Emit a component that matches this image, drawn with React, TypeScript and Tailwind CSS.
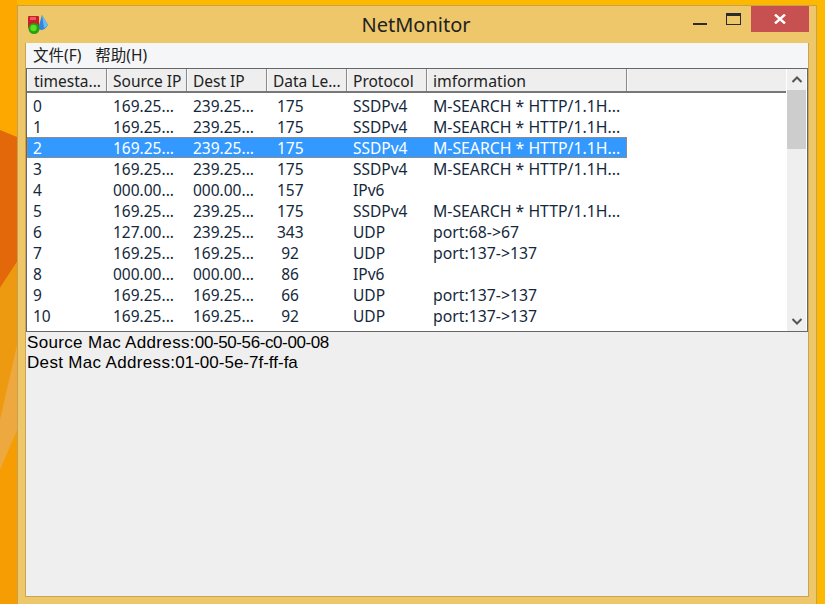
const font = "font-['Noto_Sans','Noto_Sans_CJK_SC',sans-serif]";

const columns = ["timesta...", "Source IP", "Dest IP", "Data Le...", "Protocol", "imformation"];

const search = "M-SEARCH * HTTP/1.1H...";
const rows = [
  ["0", "169.25...", "239.25...", "175", "SSDPv4", search],
  ["1", "169.25...", "239.25...", "175", "SSDPv4", search],
  ["2", "169.25...", "239.25...", "175", "SSDPv4", search],
  ["3", "169.25...", "239.25...", "175", "SSDPv4", search],
  ["4", "000.00...", "000.00...", "157", "IPv6", ""],
  ["5", "169.25...", "239.25...", "175", "SSDPv4", search],
  ["6", "127.00...", "239.25...", "343", "UDP", "port:68->67"],
  ["7", "169.25...", "169.25...", "92", "UDP", "port:137->137"],
  ["8", "000.00...", "000.00...", "86", "IPv6", ""],
  ["9", "169.25...", "169.25...", "66", "UDP", "port:137->137"],
  ["10", "169.25...", "169.25...", "92", "UDP", "port:137->137"],
];

// desktop wallpaper showing down the left edge of the window
function Wallpaper() {
  return (
    <svg className="absolute left-0 top-0" width="17" height="604" viewBox="0 0 17 604">
      <rect width="17" height="604" fill="#fca800" />
      <path d="M0 130 L17 137 L17 262 L0 288 Z" fill="#e2680a" />
      <path d="M0 288 L17 262 L17 470 L0 604 Z" fill="#ee9a10" />
      <path d="M0 420 L17 345 L17 440 L0 470 Z" fill="#eda83f" />
      <path d="M0 470 L17 430 L17 604 L0 604 Z" fill="#f59d02" />
    </svg>
  );
}

function AppIcon() {
  return (
    <svg width="22" height="22" viewBox="0 0 22 22">
      <path d="M11 15 L15 1 L21 11 Q18 16 14 16 Z" fill="#2f86dc" />
      <path d="M15 1 L21 11 Q20 13 17 14 Z" fill="#6db8f0" />
      <rect x="1" y="2" width="11" height="12" rx="1" fill="#c8202a" />
      <rect x="3" y="3" width="6" height="3" fill="#ee5a5e" />
      <circle cx="7" cy="14.5" r="5.5" fill="#26a012" />
      <circle cx="6.5" cy="14" r="3.2" fill="#58e01e" />
    </svg>
  );
}

function TitleBar() {
  return (
    <div className="flex h-[37px] shrink-0 items-start">
      <div className="ml-[2px] mt-[8px] w-[22px]">
        <AppIcon />
      </div>
      <div className={`${font} ml-[295px] mt-[6px] w-[144px] text-center text-[20px] leading-[26px] text-[#222]`}>
        NetMonitor
      </div>
      <div className="ml-[205px] mt-[17px] h-[2px] w-[14px] bg-[#2b2b2b]" />
      <div className="ml-[19px] mt-[7px] h-[12px] w-[15px] border border-t-[3px] border-[#2b2b2b]" />
      <div className="ml-[10px] flex h-[26px] w-[58px] items-center justify-center bg-[#c75050]">
        <svg width="12" height="10" viewBox="0 0 12 10">
          <path d="M1 0.5 L11 9.5 M11 0.5 L1 9.5" stroke="#fff" strokeWidth="2.4" />
        </svg>
      </div>
    </div>
  );
}

function Scrollbar() {
  return (
    <div className="flex w-[21px] shrink-0 flex-col items-center border-x border-white bg-[#efefef]">
      <svg className="mt-[6px] shrink-0" width="12" height="9" viewBox="0 0 12 9">
        <path d="M1.5 7 L6 2.5 L10.5 7" fill="none" stroke="#555" strokeWidth="2" />
      </svg>
      <div className="mt-[6px] h-[59px] w-[19px] shrink-0 bg-[#cdcdcd]" />
      <svg className="mt-auto mb-[5px] shrink-0" width="12" height="9" viewBox="0 0 12 9">
        <path d="M1.5 2 L6 6.5 L10.5 2" fill="none" stroke="#555" strokeWidth="2" />
      </svg>
    </div>
  );
}

function Table() {
  return (
    <div className={`${font} flex h-[264px] w-[782px] shrink-0 border border-[#666] text-[15.5px]`}>
      <div className="min-w-0 flex-1">
        <div className="flex h-[24px] border-b-2 border-[#777] bg-[#eeeeee]">
          {columns.map((c, i) => (
            <div
              key={c}
              className={`flex items-center border-x border-r-[#8a8a8a] border-l-[#fafafa] pt-[3px] text-[#222] ${i === 0 ? "pl-[6px]" : "pl-[5px]"} ${i === 5 ? "w-[200px] text-[15.8px]" : "w-[80px]"}`}
            >
              {c}
            </div>
          ))}
          <div className="flex-1 border-l border-[#fafafa]" />
        </div>
        <div className="h-[238px] overflow-hidden bg-white pt-[2px]">
          {rows.map((r, i) => (
            <div
              key={r[0]}
              className={`flex h-[21px] w-[600px] items-center pt-[2px] leading-[21px] ${i === 2 ? "border border-dotted border-[#d9822b] bg-[#3399ff] text-white" : "text-[#14283c]"}`}
            >
              <div className={i === 2 ? "w-[79px] pl-[5px]" : "w-[80px] pl-[6px]"}>{r[0]}</div>
              <div className="w-[80px] pl-[6px]">{r[1]}</div>
              <div className="w-[80px] pl-[6px]">{r[2]}</div>
              <div className="w-[80px]">
                <div className="ml-[10px] w-[26px] text-center">{r[3]}</div>
              </div>
              <div className="w-[80px] pl-[6px]">{r[4]}</div>
              <div className="w-[198px] pl-[6px] text-[15.8px] whitespace-nowrap">{r[5]}</div>
            </div>
          ))}
        </div>
      </div>
      <Scrollbar />
    </div>
  );
}

export default function App() {
  return (
    <div className="relative h-[604px] w-[825px] overflow-hidden bg-[#ffb800] pl-[17px] pt-[5px]">
      <Wallpaper />
      <div className="relative flex h-[610px] w-[800px] flex-col border border-[#c4a04f] bg-[#eec76b] pl-[7px]">
        <TitleBar />
        <div className="flex h-[554px] w-[784px] flex-col border border-t-0 border-[#c9a450] bg-[#efefef]">
          <div className={`${font} flex h-[25px] shrink-0 items-center gap-[14px] bg-[#f5f6f7] pl-[7px] text-[15.5px] text-[#222]`}>
            <span>文件(F)</span>
            <span>帮助(H)</span>
          </div>
          <Table />
          <div className="pl-[1px] pt-[1px] font-['Liberation_Sans',sans-serif] text-[17px] leading-[20px] text-black">
            <div>
              <span className="tracking-[0.33px]">Source Mac Address:</span>
              <span className="tracking-[-0.4px]">00-50-56-c0-00-08</span>
            </div>
            <div>
              <span className="tracking-[0.33px]">Dest Mac Address:</span>
              <span>01-00-5e-7f-ff-fa</span>
            </div>
          </div>
        </div>
      </div>
    </div>
  );
}
